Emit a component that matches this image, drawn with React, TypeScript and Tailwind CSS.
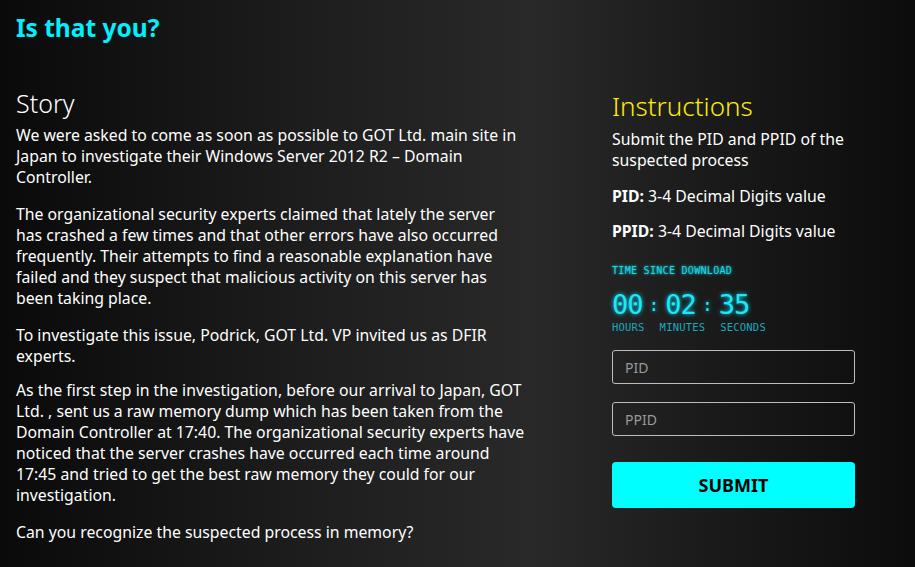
export default function App() {
    const font = { fontFamily: '"Noto Sans", "Open Sans", sans-serif' }

    return (
        <div
            className="min-h-[567px] w-full bg-[linear-gradient(to_right,#0a0a0a_0%,#1e1e1e_35%,#292929_58%,#1a1a1a_78%,#0c0c0c_100%)] text-white"
            style={font}
        >
            <div className="px-4 pt-[12px]">
                <h1 className="text-[24.5px] leading-[32px] font-bold text-[#00f0ff]">Is that you?</h1>
            </div>

            <div className="mt-[43px] flex">
                {/* story */}
                <div className="w-[612px] pl-4 text-[15.8px] leading-[21px]">
                    <h2 className="text-[25px] font-light leading-[32px]">Story</h2>
                    <div className="mt-[6px] flex flex-col whitespace-nowrap">
                        <p>
                            We were asked to come as soon as possible to GOT Ltd. main site in
                            <br />
                            Japan to investigate their Windows Server 2012 R2 – Domain
                            <br />
                            Controller.
                        </p>
                        <p className="mt-4">
                            The organizational security experts claimed that lately the server
                            <br />
                            has crashed a few times and that other errors have also occurred
                            <br />
                            frequently. Their attempts to find a reasonable explanation have
                            <br />
                            failed and they suspect that malicious activity on this server has
                            <br />
                            been taking place.
                        </p>
                        <p className="mt-4">
                            To investigate this issue, Podrick, GOT Ltd. VP invited us as DFIR
                            <br />
                            experts.
                        </p>
                        <p className="mt-[13px]">
                            As the first step in the investigation, before our arrival to Japan, GOT
                            <br />
                            Ltd. , sent us a raw memory dump which has been taken from the
                            <br />
                            Domain Controller at 17:40. The organizational security experts have
                            <br />
                            noticed that the server crashes have occurred each time around
                            <br />
                            17:45 and tried to get the best raw memory they could for our
                            <br />
                            investigation.
                        </p>
                        <p className="mt-4">Can you recognize the suspected process in memory?</p>
                    </div>
                </div>

                {/* instructions */}
                <div className="w-[243px] pt-[3px] text-[15.8px] leading-[21px]">
                    <h2 className="text-[26px] font-light leading-[32px] text-[#ffee00]">Instructions</h2>
                    <p className="mt-[7px]">
                        Submit the PID and PPID of the
                        <br />
                        suspected process
                    </p>
                    <p className="mt-[15px]">
                        <span className="font-bold">PID:</span> 3-4 Decimal Digits value
                    </p>
                    <p className="mt-[14px]">
                        <span className="font-bold">PPID:</span> 3-4 Decimal Digits value
                    </p>

                    <div
                        className="mt-[23px] text-[#22d6e0]"
                        style={{ fontFamily: '"DejaVu Sans Mono", monospace' }}
                    >
                        <div className="text-[10px] leading-[12px] tracking-[0.3px] uppercase [text-shadow:0_0_3px_#00e5ff]">
                            Time since download
                        </div>
                        <div className="mt-[14px] flex items-center text-[27px] leading-[28px] text-[#1de9f5] [text-shadow:0_0_4px_#00d8ff]">
                            <span className="tracking-[-1px]">00</span>
                            <span className="mx-[6px] text-[18px]">:</span>
                            <span className="tracking-[-1px]">02</span>
                            <span className="mx-[6px] text-[18px]">:</span>
                            <span className="tracking-[-1px]">35</span>
                        </div>
                        <div className="mt-[2px] flex gap-[15px] text-[10.5px] leading-[12px] tracking-[0.2px] uppercase text-[#1aa9c0]">
                            <span>Hours</span>
                            <span>Minutes</span>
                            <span>Seconds</span>
                        </div>
                    </div>

                    <div className="mt-[17px] flex flex-col gap-[18px]">
                        <input
                            placeholder="PID"
                            className="h-[34px] w-full rounded-[3px] border border-[#bdbdbd] bg-transparent px-3 text-[14px] text-white placeholder:text-[#9a9a9a] outline-none"
                        />
                        <input
                            placeholder="PPID"
                            className="h-[34px] w-full rounded-[3px] border border-[#bdbdbd] bg-transparent px-3 text-[14px] text-white placeholder:text-[#9a9a9a] outline-none"
                        />
                    </div>
                    <button className="mt-[26px] h-[46px] w-full rounded-[4px] bg-[#00ffff] text-[18px] font-bold text-black">
                        SUBMIT
                    </button>
                </div>
            </div>
        </div>
    )
}
